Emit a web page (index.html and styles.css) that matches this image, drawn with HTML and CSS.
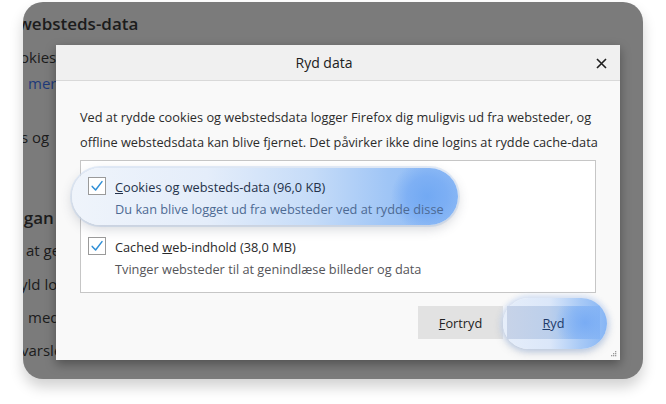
FILE: index.html
```html
<!DOCTYPE html>
<html lang="da">
<head>
<meta charset="utf-8">
<title>Ryd data</title>
<link rel="stylesheet" href="styles.css">
</head>
<body>
<div class="card">
  <div class="page">
    <div class="bg-line bg-h">websteds-data</div>
    <div class="bg-line bg-l1">okies</div>
    <div class="bg-line bg-l2 bg-link">mere</div>
    <div class="bg-line bg-l3">s og</div>
    <div class="bg-line bg-l4 bg-bold">lgan</div>
    <div class="bg-line bg-l5">at ge</div>
    <div class="bg-line bg-l6">yld lo</div>
    <div class="bg-line bg-l7">med</div>
    <div class="bg-line bg-l8">varsle</div>
  </div>

  <div class="dialog">
    <div class="dlg-head">
      <span class="dlg-title">Ryd data</span>
      <span class="dlg-close">
        <svg width="11" height="11" viewBox="0 0 11 11"><path d="M1 1 L10 10 M10 1 L1 10" stroke="#1f1f1f" stroke-width="1.6" fill="none"/></svg>
      </span>
    </div>
    <div class="dlg-body">
      <p class="intro"><span class="intro-line">Ved at rydde cookies og webstedsdata logger Firefox dig muligvis ud fra websteder, og</span><span class="intro-line">offline webstedsdata kan blive fjernet. Det påvirker ikke dine logins at rydde cache-data</span></p>
      <div class="listbox">
        <div class="item item-focus">
          <span class="glow"></span>
          <span class="cb"><svg width="18" height="18" viewBox="0 0 18 18"><path d="M4.2 9.4 L7.6 13 L14 4.6" stroke="#2f8fd6" stroke-width="1.5" fill="none" stroke-linecap="round" stroke-linejoin="round"/></svg></span>
          <div class="item-text">
            <div class="item-label"><u>C</u>ookies og websteds-data (96,0 KB)</div>
            <div class="item-desc">Du kan blive logget ud fra websteder ved at rydde disse</div>
          </div>
        </div>
        <div class="item">
          <span class="cb"><svg width="18" height="18" viewBox="0 0 18 18"><path d="M4.2 9.4 L7.6 13 L14 4.6" stroke="#2f8fd6" stroke-width="1.5" fill="none" stroke-linecap="round" stroke-linejoin="round"/></svg></span>
          <div class="item-text">
            <div class="item-label">Cached <u>w</u>eb-indhold (38,0 MB)</div>
            <div class="item-desc">Tvinger websteder til at genindlæse billeder og data</div>
          </div>
        </div>
      </div>
      <div class="footer">
        <button class="btn btn-cancel"><u>F</u>ortryd</button>
        <button class="btn btn-primary"><span class="btn-glow"></span><span class="btn-face"></span><span class="btn-text"><u>R</u>yd</span></button>
      </div>
    </div>
    <svg class="grip" width="6" height="6" viewBox="0 0 6 6">
      <rect x="4" y="0" width="1.3" height="1.3" fill="#9a9a9a"/>
      <rect x="2" y="2" width="1.3" height="1.3" fill="#9a9a9a"/>
      <rect x="4" y="2" width="1.3" height="1.3" fill="#9a9a9a"/>
      <rect x="0" y="4" width="1.3" height="1.3" fill="#9a9a9a"/>
      <rect x="2" y="4" width="1.3" height="1.3" fill="#9a9a9a"/>
      <rect x="4" y="4" width="1.3" height="1.3" fill="#9a9a9a"/>
    </svg>
  </div>
</div>
</body>
</html>
```

FILE: styles.css
```css
* { box-sizing: border-box; }
html, body { margin: 0; padding: 0; background: #ffffff; }
body {
  font-family: "Open Sans", "Noto Sans", "Liberation Sans", sans-serif;
  width: 666px;
  height: 404px;
  overflow: hidden;
}

.card {
  position: relative;
  margin: 2px 0 0 23px;
  width: 620px;
  height: 377px;
  border-radius: 20px;
  background: #7b7b7b;
  overflow: hidden;
  box-shadow: 0 8px 14px rgba(0, 0, 0, 0.18);
}

.page {
  padding-top: 10px;
  color: #1c1c1c;
  font-size: 15px;
}
.bg-line { line-height: 24px; height: 24px; white-space: nowrap; margin-left: -2px; }
.bg-h { font-size: 17px; font-weight: 600; margin-left: -5px; }
.bg-l1 { margin-top: 9px; margin-left: -3px; }
.bg-l2 { margin-top: 2px; margin-left: 5px; }
.bg-link { color: #1e3a7a; }
.bg-l3 { margin-top: 30px; }
.bg-l4 { margin-top: 57px; }
.bg-bold { font-size: 17px; font-weight: 600; margin-left: -4px; }
.bg-l5 { margin-top: 8px; margin-left: 3px; }
.bg-l6 { margin-top: 10px; margin-left: -3px; }
.bg-l7 { margin-top: 9px; margin-left: 5px; }
.bg-l8 { margin-top: 9px; margin-left: -2px; }

.dialog {
  position: absolute;
  left: 33px;
  top: 43px;
  width: 564px;
  height: 315px;
  background: #f9f9f9;
  box-shadow: 0 4px 10px rgba(0, 0, 0, 0.35);
  color: #2a2a2a;
}

.dlg-head {
  height: 36px;
  background: #f0f0f0;
  border-bottom: 1px solid #d9d9d9;
  display: flex;
  align-items: center;
  justify-content: center;
  padding-right: 28px;
  position: relative;
}
.dlg-title { font-size: 14px; color: #202020; }
.dlg-close {
  position: absolute;
  right: 13px;
  top: 13px;
  width: 11px;
  height: 11px;
  display: flex;
}

.dlg-body { padding: 24px 24px 0 24px; }
.intro {
  margin: 0;
  font-size: 12.75px;
  line-height: 25px;
  color: #2b2b2b;
}
.intro-line { display: block; white-space: nowrap; }

.listbox {
  position: relative;
  margin-top: 5px;
  background: #ffffff;
  border: 1px solid #c6c6c6;
  padding: 15px 7px 11px 7px;
  height: 133px;
}

.item {
  position: relative;
  display: flex;
  gap: 9px;
  font-size: 12.75px;
}
.item + .item { margin-top: 16px; }
.item-text { position: relative; z-index: 1; }
.item-label { line-height: 22px; color: #2a2a2a; }
.item-desc { line-height: 22px; color: #555559; }
.item-focus .item-desc { color: #4d6a93; }
.item-focus .item-label { color: #24324a; }

.cb {
  position: relative;
  z-index: 1;
  flex: none;
  width: 18px;
  height: 18px;
  margin-top: 1px;
  border: 1px solid #9a9a9a;
  background: #ffffff;
  display: flex;
}
.cb svg { margin: -1px; }

.glow {
  position: absolute;
  left: -16px;
  top: -8px;
  width: 386px;
  height: 57px;
  border-radius: 29px;
  background:
    radial-gradient(circle at 355px 50%, rgba(112, 168, 243, 0.95) 0, rgba(120, 172, 244, 0.8) 20px, rgba(140, 185, 246, 0) 36px),
    linear-gradient(90deg, #eff4fb 0%, #e4edfa 35%, #c6dcf8 62%, #9fc5f6 82%, #8ab8f5 100%);
  box-shadow: 0 4px 12px rgba(60, 70, 90, 0.22), 0 0 0 2px rgba(220, 232, 250, 0.7);
  z-index: 0;
}

.footer {
  display: flex;
  justify-content: flex-end;
  gap: 4px;
  margin-top: 13px;
  margin-right: -4px;
}
.btn {
  position: relative;
  height: 33px;
  border: none;
  font-family: inherit;
  font-size: 12.75px;
  color: #222222;
  padding: 0;
  background: transparent;
}
.btn-cancel { width: 85px; background: #e2e2e2; }
.btn-primary {
  width: 93px;
  color: #1d3a6a;
}
.btn-glow {
  position: absolute;
  left: -4px;
  top: -8px;
  width: 104px;
  height: 51px;
  border-radius: 26px;
  background: linear-gradient(90deg, #e6eefa 0%, #dbe7f9 45%, #a7c9f6 75%, #86b5f5 100%);
  box-shadow: 0 3px 10px rgba(60, 80, 110, 0.25), 0 0 4px 3px rgba(215, 230, 252, 0.7);
}
.btn-face {
  position: absolute;
  left: 0;
  top: 0;
  width: 93px;
  height: 33px;
  background:
    radial-gradient(circle at 78px 50%, rgba(110, 165, 244, 0.75) 0, rgba(120, 172, 245, 0.5) 16px, rgba(140, 185, 246, 0) 30px),
    linear-gradient(90deg, #c7d3e8 0%, #bccfeb 45%, #9cc2f3 75%, rgba(134, 181, 245, 0.4) 100%);
}
.btn-text { position: relative; }

.grip {
  position: absolute;
  right: 3px;
  bottom: 3px;
}
```
